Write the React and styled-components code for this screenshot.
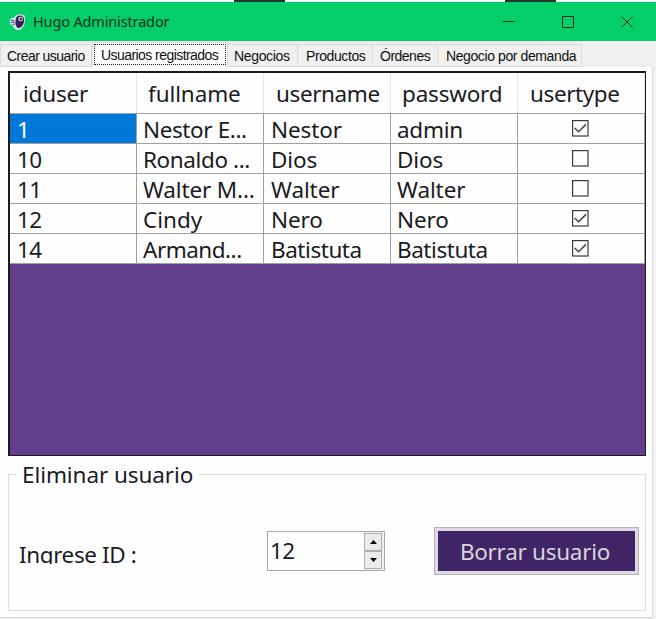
import React from "react";
import styled, { createGlobalStyle } from "styled-components";

const GlobalStyle = createGlobalStyle`
  * { box-sizing: border-box; }
  body { margin: 0; background: #fff; overflow: hidden; }
  button { font: inherit; }
`;

const Window = styled.div`
  width: 656px;
  height: 619px;
  display: flex;
  flex-direction: column;
  background: #f0f0f0;
  color: #1b1b1f;
  font-family: "Noto Sans", "Open Sans", sans-serif;
  font-size: 22.5px;
  white-space: nowrap;
`;

const TopEdge = styled.div`
  height: 2px;
  flex: none;
  display: grid;
  grid-template-columns: 234px 51px 220px 51px 1fr;
  background: #f6fbf8;
`;

const EdgeMark = styled.i`
  background: ${(p) => p.$color};
`;

const TitleBar = styled.header`
  height: 39px;
  flex: none;
  display: flex;
  align-items: center;
  padding-left: 9px;
  background: #03ce6a;
  color: #06301c;
`;

const Title = styled.h1`
  flex: 1;
  margin: 0 0 1px 7px;
  font-size: 14.5px;
  font-weight: 400;
  line-height: 20px;
  letter-spacing: ${(p) => p.$ls}px;
`;

const CaptionButton = styled.button`
  width: 59px;
  height: 39px;
  padding: 0;
  border: 0;
  background: none;
  color: #06301c;
  display: grid;
  place-items: center;
`;

const CaptionGroup = styled.div`
  display: flex;
`;

const TabStrip = styled.nav`
  height: 26px;
  flex: none;
  display: flex;
  align-items: flex-end;
  font-family: "Liberation Sans", Arial, sans-serif;
  font-size: 14px;
  color: #111;
`;

const Tab = styled.button`
  width: ${(p) => p.$w}px;
  height: ${(p) => (p.$active ? 25 : 23)}px;
  padding: ${(p) => (p.$active ? "0 0 1px" : "1px 0 0")};
  padding-left: ${(p) => p.$pad}px;
  border: 1px solid #dcdcdc;
  border-left-width: ${(p) => (p.$first || p.$active ? 1 : 0)}px;
  border-bottom: ${(p) => (p.$active ? "0" : "1px solid #dcdcdc")};
  background: ${(p) => (p.$active ? "#fff" : "#f0f0f0")};
  color: inherit;
  text-align: left;
  letter-spacing: ${(p) => p.$ls}px;
  outline: ${(p) => (p.$active ? "1px dotted #222" : "0")};
  outline-offset: -3px;
`;

const Page = styled.main`
  flex: 1;
  width: 653px;
  padding: 4px 6px 0 8px;
  background: #fefefe;
  border-right: 1px solid #dadada;
  border-bottom: 1px solid #d6d6d6;
  margin-bottom: 1px;
`;

const DataGrid = styled.section`
  width: 638px;
  height: 385px;
  border: 2px solid #1b1b1f;
  border-right-width: 1px;
  border-bottom-width: 1px;
  background: #623e8d;
`;

const Row = styled.div`
  display: grid;
  grid-template-columns: 127px 127px 127px 127px 127px;
  height: ${(p) => (p.$header ? 41 : 30)}px;
  background: #fefefe;
  border-bottom: 1px solid #a0a0a0;
`;

const HeaderCell = styled.div`
  padding: 6px 0 0 ${(p) => p.$pad}px;
  line-height: 30px;
  border-right: 1px solid #e6e6e6;
  letter-spacing: ${(p) => p.$ls}px;
`;

const Cell = styled.div`
  padding: 3px 0 0 ${(p) => p.$pad || 7}px;
  line-height: 26px;
  height: 29px;
  border-right: 1px solid #a0a0a0;
  background: ${(p) => (p.$selected ? "#0078d7" : "transparent")};
  color: ${(p) => (p.$selected ? "#fff" : "inherit")};
  letter-spacing: ${(p) => p.$ls}px;
`;

const CheckCell = styled(Cell)`
  display: grid;
  justify-content: center;
  padding: 6px 1px 0 0;
`;

const GroupBox = styled.fieldset`
  width: 638px;
  height: 152px;
  margin: 3px 0 0;
  padding: 0 5px 0 10px;
  border: 1px solid #dcdcdc;
`;

const Legend = styled.legend`
  margin-left: -2px;
  padding: 0 6px 0 5px;
  line-height: 31px;
  letter-spacing: ${(p) => p.$ls}px;
`;

const FormRow = styled.div`
  display: flex;
  align-items: flex-start;
  margin-top: 37px;
`;

const FieldLabel = styled.label`
  width: 248px;
  height: 24px;
  margin-top: 13px;
  overflow: hidden;
  line-height: 29px;
  letter-spacing: ${(p) => p.$ls}px;
`;

const Spinner = styled.div`
  width: 118px;
  height: 40px;
  margin-top: 4px;
  display: flex;
  border: 1px solid #a8a8ac;
  background: #fefefe;
`;

const SpinValue = styled.span`
  flex: 1;
  padding: 4px 0 0 2px;
  line-height: 30px;
  letter-spacing: ${(p) => p.$ls}px;
`;

const SpinButtons = styled.div`
  width: 20px;
  display: grid;
  grid-template-rows: 1fr 1fr;
  padding: 1px 2px 1px 0;
  background: #f0f0f0;
`;

const SpinButton = styled.button`
  padding: 0;
  border: 1px solid #adadad;
  background: #ebebeb;
  display: grid;
  place-items: center;
`;

const DeleteButton = styled.button`
  width: 205px;
  height: 48px;
  margin-left: 49px;
  padding: 0 3px 0 0;
  border: 1px solid #b4b4b4;
  background: #402566;
  box-shadow: inset 0 0 0 3px #dfd9e6;
  color: #d8d4dc;
  letter-spacing: ${(p) => p.$ls}px;
`;

const Logo = () => (
  <svg width="17" height="18" viewBox="0 0 17 18">
    <path d="M.5 6.500l2.500-1.500 2-.5L7.500 2l4-1 4 1.500.8 4-1.300 6-3 4-3.500 1-3.500-2-1.500-3-2.500-1.500 0-1.500z" fill="#cfe3e4" />
    <path d="M7.200 4.600C8.600 2.400 12 1.800 14 3.800c2 2.200 1.200 6.600-.9 9.200-1.300 1.600-3.400 2.700-4.800 1.500-1.500-1.400-2.100-3.400-1.800-5.200.2-1.700.1-3.200.7-4.700z" fill="#38205f" />
    <path d="M1.500 7l4 .9M2 9.200l3.600.4M3.500 11.500l2.300-.5" stroke="#5a4a85" strokeWidth="1" />
    <circle cx="11.600" cy="6" r="2.300" fill="#dcd6ea" />
    <circle cx="11.800" cy="6" r="1.200" fill="#38205f" />
  </svg>
);

const CheckBox = ({ checked }) => (
  <svg width="17" height="17" viewBox="0 0 17 17" fill="none" role="img">
    <rect x=".6" y=".6" width="15.400" height="15.400" stroke="#3a3a3a" strokeWidth="1.200" />
    {checked && <path d="M2.600 8l4 3.800 7.400-7.400" stroke="#444" strokeWidth="1.500" />}
  </svg>
);

const captions = [
  ["Minimizar", "M0 5.500h12"],
  ["Maximizar", "M.5.5h11v11H.5z"],
  ["Cerrar", "M.5.500l11 11M11.500.500l-11 11"],
];

const tabs = [
  { text: "Crear usuario", w: 92, pad: 6, ls: -0.55, first: true },
  { text: "Usuarios registrados", w: 136, pad: 8, ls: -0.56, active: true },
  { text: "Negocios", w: 70, pad: 6, ls: -0.35 },
  { text: "Productos", w: 75, pad: 8, ls: -0.4 },
  { text: "Órdenes", w: 65, pad: 7, ls: -0.5 },
  { text: "Negocio por demanda", w: 144, pad: 8, ls: -0.4 },
];

const headers = [
  ["iduser", 13, -0.2],
  ["fullname", 11, -0.1],
  ["username", 12, -0.4],
  ["password", 11, -0.2],
  ["usertype", 12, -0.4],
];

const users = [
  ["1", "Nestor E...", -0.4, "Nestor", "admin", true],
  ["10", "Ronaldo ...", -0.4, "Dios", "Dios", false],
  ["11", "Walter M...", -0.15, "Walter", "Walter", false],
  ["12", "Cindy", 0, "Nero", "Nero", true],
  ["14", "Armand...", -0.5, "Batistuta", "Batistuta", true],
];

const tracking = { Batistuta: -0.45, admin: -0.25 };

export default function App() {
  return (
    <>
      <GlobalStyle />
      <Window>
        <TopEdge>
          <EdgeMark $color="#f6fbf8" />
          <EdgeMark $color="#24332c" />
          <EdgeMark $color="#f6fbf8" />
          <EdgeMark $color="#24332c" />
        </TopEdge>
        <TitleBar>
          <Logo />
          <Title $ls={-0.15}>Hugo Administrador</Title>
          <CaptionGroup>
            {captions.map(([name, d]) => (
              <CaptionButton key={name} aria-label={name}>
                <svg width="12" height="12" viewBox="0 0 12 12" fill="none" stroke="currentColor">
                  <path d={d} />
                </svg>
              </CaptionButton>
            ))}
          </CaptionGroup>
        </TitleBar>
        <TabStrip>
          {tabs.map((t) => (
            <Tab key={t.text} $w={t.w} $pad={t.pad} $ls={t.ls} $active={t.active} $first={t.first}>
              {t.text}
            </Tab>
          ))}
        </TabStrip>
        <Page>
          <DataGrid>
            <Row $header>
              {headers.map(([text, pad, ls]) => (
                <HeaderCell key={text} $pad={pad} $ls={ls}>{text}</HeaderCell>
              ))}
            </Row>
            {users.map(([id, full, fullLs, user, pass, checked], i) => (
              <Row key={id}>
                <Cell $selected={i === 0} $ls={-0.5}>{id}</Cell>
                <Cell $pad={6} $ls={fullLs}>{full}</Cell>
                <Cell $ls={tracking[user] || -0.1}>{user}</Cell>
                <Cell $pad={6} $ls={tracking[pass] || -0.1}>{pass}</Cell>
                <CheckCell><CheckBox checked={checked} /></CheckCell>
              </Row>
            ))}
          </DataGrid>
          <GroupBox>
            <Legend $ls={-0.08}>Eliminar usuario</Legend>
            <FormRow>
              <FieldLabel $ls={-0.4}>Ingrese ID :</FieldLabel>
              <Spinner>
                <SpinValue $ls={-0.5}>12</SpinValue>
                <SpinButtons>
                  <SpinButton aria-label="Aumentar">
                    <svg width="7" height="4" viewBox="0 0 7 4"><path d="M0 4L3.500 0 7 4z" /></svg>
                  </SpinButton>
                  <SpinButton aria-label="Disminuir">
                    <svg width="7" height="4" viewBox="0 0 7 4"><path d="M0 0h7L3.500 4z" /></svg>
                  </SpinButton>
                </SpinButtons>
              </Spinner>
              <DeleteButton $ls={-0.28}>Borrar usuario</DeleteButton>
            </FormRow>
          </GroupBox>
        </Page>
      </Window>
    </>
  );
}
